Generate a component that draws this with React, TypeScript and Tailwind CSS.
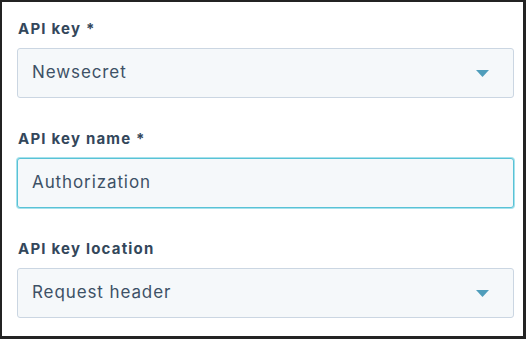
import React from "react";

function Caret() {
  return (
    <svg width="13" height="7" viewBox="0 0 13 7" className="shrink-0">
      <path d="M0 0 H13 L6.5 7 Z" fill="#4f9dbb" />
    </svg>
  );
}

function Label({ children }: { children: React.ReactNode }) {
  return (
    <div className="h-[20px] mb-[9px] text-[15px] leading-[20px] font-bold text-[#33475b] pl-[1px] tracking-[1.2px]">
      {children}
    </div>
  );
}

export default function App() {
  return (
    <div
      className="w-[526px] h-[339px] bg-[#232323] pt-[2px] pl-[2px] pr-[3px] pb-[3px]"
      style={{ fontFamily: "Inter, 'Noto Sans', sans-serif" }}
    >
      <div className="w-full h-full bg-white pl-[15px] pr-[9px] pt-[17px] flex flex-col gap-[31px]">
        <div>
          <Label>API key *</Label>
          <div className="h-[50px] rounded-[3px] border border-[#cbd6e2] bg-[#f5f8fa] flex items-center justify-between pl-[14px] pr-[24px]">
            <span className="text-[17px] text-[#3d5166] tracking-[0.9px]">Newsecret</span>
            <Caret />
          </div>
        </div>
        <div>
          <Label>API key name *</Label>
          <div className="h-[50px] rounded-[3px] border border-[#59c2d6] shadow-[0_0_0_1px_#a6e2ec] bg-[#f5f8fa] flex items-center pl-[14px]">
            <span className="text-[17px] text-[#3d5166] tracking-[0.9px]">Authorization</span>
          </div>
        </div>
        <div>
          <Label>API key location</Label>
          <div className="h-[50px] rounded-[3px] border border-[#cbd6e2] bg-[#f5f8fa] flex items-center justify-between pl-[14px] pr-[24px]">
            <span className="text-[17px] text-[#3d5166] tracking-[0.9px]">Request header</span>
            <Caret />
          </div>
        </div>
      </div>
    </div>
  );
}
